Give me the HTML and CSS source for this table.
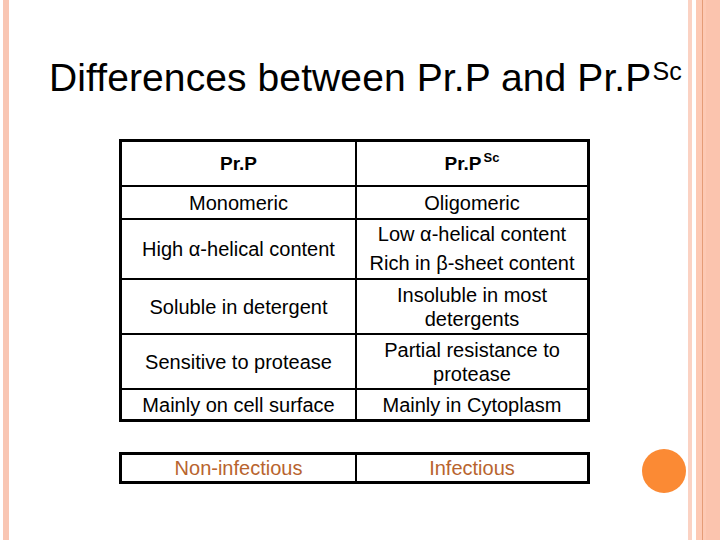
FILE: index.html
```html
<!DOCTYPE html>
<html>
<head>
<meta charset="utf-8">
<link rel="stylesheet" href="styles.css">
</head>
<body>
<div class="slide">
  <div class="left-bar"></div>
  <main class="content">
    <h1 class="title">Differences between Pr.P and Pr.P<sup class="title-sup">Sc</sup></h1>
    <table class="grid main-grid">
      <tr class="r-head">
        <th class="c-left">Pr.P</th>
        <th class="c-right">Pr.P<sup class="head-sup">Sc</sup></th>
      </tr>
      <tr class="r1">
        <td class="c-left">Monomeric</td>
        <td class="c-right">Oligomeric</td>
      </tr>
      <tr class="r2">
        <td class="c-left">High α-helical content</td>
        <td class="c-right"><span class="wide-line">Low α-helical content</span><span class="wide-line">Rich in β-sheet content</span></td>
      </tr>
      <tr class="r3">
        <td class="c-left">Soluble in detergent</td>
        <td class="c-right">Insoluble in most<br>detergents</td>
      </tr>
      <tr class="r4">
        <td class="c-left">Sensitive to protease</td>
        <td class="c-right">Partial resistance to<br>protease</td>
      </tr>
      <tr class="r5 last">
        <td class="c-left">Mainly on cell surface</td>
        <td class="c-right">Mainly in Cytoplasm</td>
      </tr>
    </table>
    <table class="grid infect-grid">
      <tr class="r-inf last">
        <td class="c-left">Non-infectious</td>
        <td class="c-right">Infectious</td>
      </tr>
    </table>
    <div class="dot"></div>
  </main>
  <div class="right-deco">
    <div class="rs rs1"></div>
    <div class="rs rs-gap"></div>
    <div class="rs rs2"></div>
    <div class="rs rs-line"></div>
    <div class="rs rs3"></div>
    <div class="rs rs4"></div>
  </div>
</div>
</body>
</html>
```

FILE: styles.css
```css
html, body {
  margin: 0;
  padding: 0;
  background: #ffffff;
}

.slide {
  display: flex;
  width: 720px;
  height: 540px;
  overflow: hidden;
  font-family: "Liberation Sans", Arial, sans-serif;
  color: #000;
}

.left-bar {
  width: 6px;
  margin-left: 3px;
  background: #f9c6b3;
  flex: none;
}

.content {
  flex: 1;
  position: relative;
}

.title {
  margin: 55px 0 0 0;
  padding-left: 40px;
  font-size: 39px;
  line-height: 46px;
  font-weight: normal;
  white-space: nowrap;
  letter-spacing: 0.1px;
}

.title-sup {
  font-size: 25px;
  line-height: 0;
  vertical-align: 11px;
  margin-left: 1px;
}

.grid {
  border-collapse: separate;
  border-spacing: 0;
  border: 3px solid #000;
  margin-left: 110px;
  font-size: 20px;
  line-height: 24px;
  text-align: center;
  table-layout: fixed;
  width: 471px;
}

.grid th, .grid td {
  padding: 0;
  vertical-align: middle;
  border-bottom: 2px solid #000;
  box-sizing: border-box;
}

.grid .c-left {
  width: 235px;
  border-right: 2px solid #000;
}

.grid .last td {
  border-bottom: none;
}

.main-grid {
  margin-top: 38px;
}

.r-head th {
  height: 45px;
  font-weight: bold;
  font-size: 19px;
}

.head-sup {
  font-size: 13px;
  line-height: 0;
  vertical-align: 8px;
  margin-left: 2px;
}

.r1 td { height: 33px; }
.r2 td { height: 60px; }
.r3 td { height: 55px; }
.r4 td { height: 55px; }
.r5 td { height: 29px; }

.wide-line {
  display: block;
  line-height: 29px;
}

.infect-grid {
  margin-top: 30px;
}

.r-inf td {
  height: 26px;
  color: #b8642e;
}

.dot {
  position: absolute;
  left: 633px;
  top: 449px;
  width: 44px;
  height: 44px;
  border-radius: 50%;
  background: #fb8a34;
}

.right-deco {
  display: flex;
  flex: none;
  width: 32px;
  height: 100%;
}

.rs { height: 100%; flex: none; }
.rs1 { width: 4px; background: #fbd2c3; }
.rs-gap { width: 4px; background: #ffffff; }
.rs2 { width: 6px; background: #fdc9b4; }
.rs-line { width: 1px; background: #e59c77; }
.rs3 { width: 3px; background: #fdc9b4; }
.rs4 { width: 14px; background: #fbc4ae; }
```
